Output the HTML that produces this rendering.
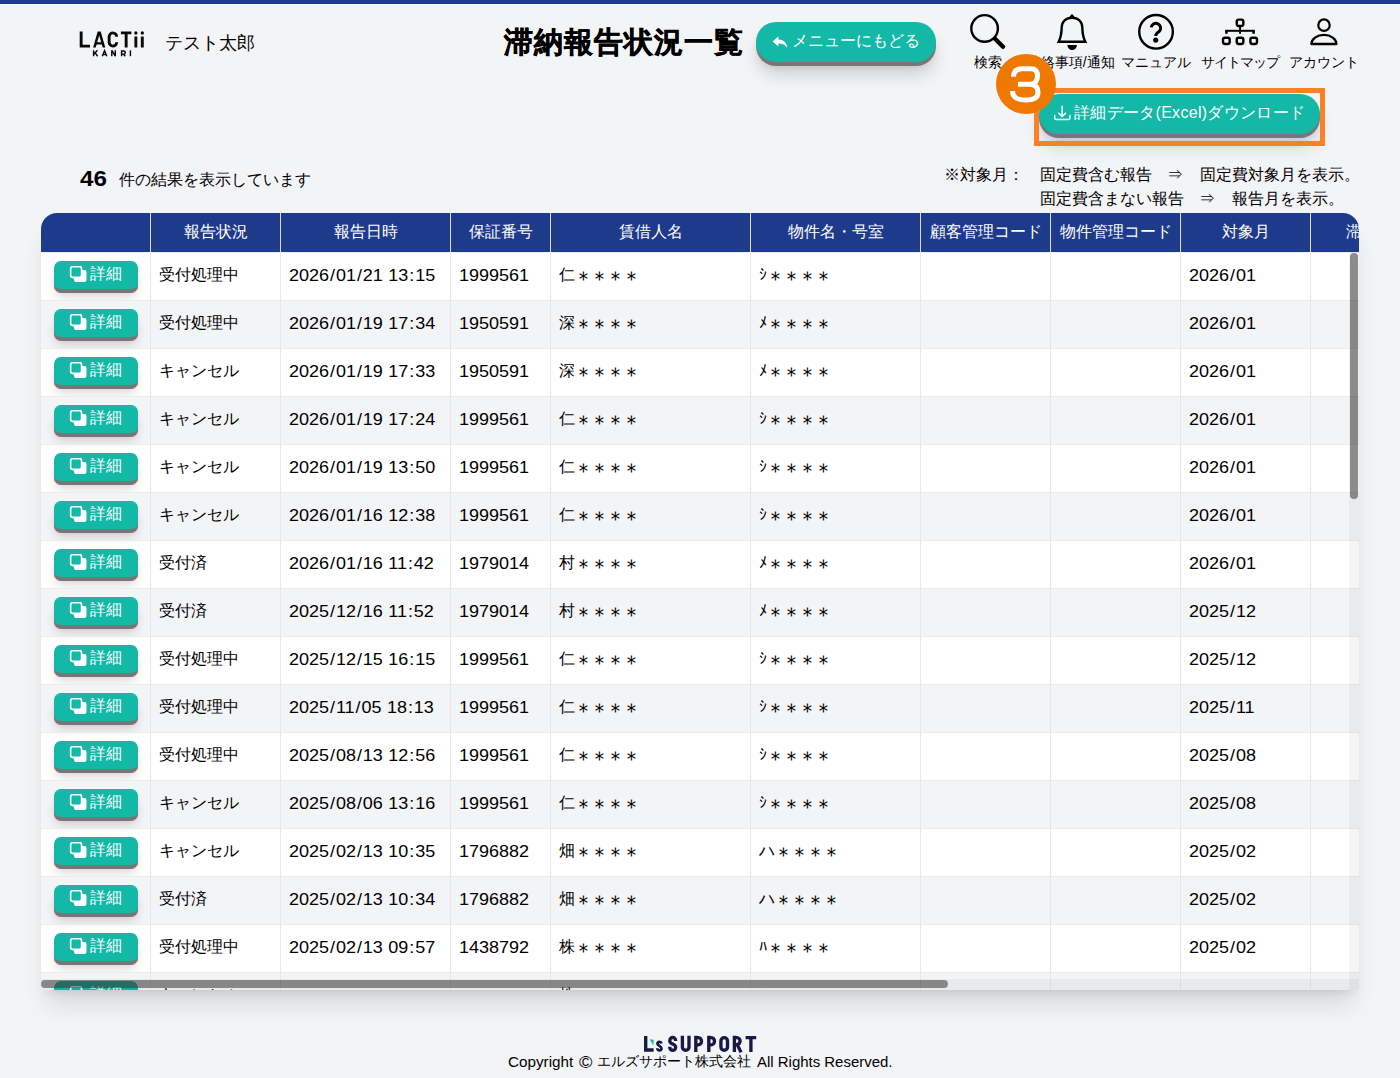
<!DOCTYPE html>
<html lang="ja">
<head>
<meta charset="utf-8">
<title>滞納報告状況一覧</title>
<style>
*{box-sizing:border-box;margin:0;padding:0}
html,body{width:1400px;height:1078px;overflow:hidden}
body{position:relative;background:#f3f4f6;color:#000;font-family:"Liberation Sans",sans-serif;font-size:16px;line-height:1}
.abs{position:absolute;white-space:nowrap}
.topbar{position:absolute;left:0;top:0;width:1400px;height:4px;background:#1e3a8a}
.user{left:165px;top:33px;font-size:18px;line-height:20px}
.title{left:504.3px;top:25px;font-size:29px;line-height:34px;font-weight:bold;letter-spacing:.95px;-webkit-text-stroke:.45px #000}
.pill{position:absolute;background:#14b8a6;color:#fff;border-radius:22px;box-shadow:0 4px 0 #777,0 14px 18px -2px rgba(0,0,0,.16),0 6px 8px -2px rgba(0,0,0,.10);white-space:nowrap}
.menu{left:756px;top:22px;width:180px;height:40px}
.menu svg{position:absolute;left:16px;top:14px}
.menu span{position:absolute;left:35.6px;top:9px;font-size:16px;line-height:20px}
.nav{position:absolute;top:0;text-align:center;white-space:nowrap}
.nav svg{position:absolute;left:0;top:0;overflow:visible}
.lbl{position:absolute;top:54.4px;font-size:14px;line-height:16px;white-space:nowrap;transform:translateX(-50%)}
.circ{position:absolute;left:996px;top:54px;width:60px;height:60px;border-radius:50%;background:#ee7800}
.hl{position:absolute;left:1034px;top:88px;width:291px;height:58px;border:5px solid #ff7f27}
.dl{left:1039px;top:94px;width:281px;height:40px;border-radius:20px}
.dl svg{position:absolute;left:14px;top:10px}
.dl span{position:absolute;left:35px;top:9px;font-size:16px;line-height:20px;letter-spacing:.3px}
.cnt{left:80.4px;top:166.6px;font-size:21.4px;line-height:24px;font-weight:bold}
.cnt2{left:119.3px;top:171px;font-size:16px;line-height:18px}
.note{font-size:16px;line-height:18px}
.v{display:inline-block;transform-origin:0 50%;white-space:nowrap}
td .v{font-size:17px;transform:scaleX(1.058);word-spacing:.4px}
.v i{font-style:normal;padding:0 .9px}
.wrap{position:absolute;left:41px;top:213px;width:1318px;height:776.6px;overflow:hidden;background:#fff;border-radius:16px 16px 0 0}
.shadow{position:absolute;left:41px;top:213px;width:1318px;height:776.6px;border-radius:16px 16px 2px 2px;box-shadow:0 20px 25px -5px rgba(0,0,0,.11),0 8px 10px -6px rgba(0,0,0,.10)}
table{border-collapse:separate;border-spacing:0;table-layout:fixed;width:1450px}
th{height:39px;padding-bottom:1.6px;background:#1e3a8a;color:#fff;font-weight:normal;font-size:16px;border-left:1px solid #d9dde6;text-align:center;vertical-align:middle;white-space:nowrap;overflow:hidden}
th:first-child{border-left:0}
td{height:48px;border-left:1px solid #e5e7eb;border-top:1px solid #ebebec;vertical-align:middle;white-space:nowrap;padding-left:8px;font-size:16px;overflow:hidden}
td:first-child{border-left:0}
tbody tr:nth-child(even) td{background:#f3f4f6}
td.c0{padding-left:13px;overflow:visible;position:relative}
.dbtn{position:absolute;left:13px;top:8px;display:block;width:84px;height:28px;border-radius:7px;background:#14b8a6;color:#fff;box-shadow:0 4px 0 #777,0 10px 12px -2px rgba(0,0,0,.14),0 4px 6px -2px rgba(0,0,0,.10)}
.dbtn .ic{position:absolute;left:15px;top:5px}
.dbtn .dt{position:absolute;left:36px;top:4px;font-size:16px;line-height:18px}
.j{display:inline-block;position:relative;top:-2px}
td .v{position:relative;top:-1px}
tbody tr:last-child .v{top:1px}
.as{display:inline-block;font-size:21px;line-height:16px;letter-spacing:-5px;margin-left:-2.5px;vertical-align:top;position:relative;top:4.4px}
.vtr{position:absolute;left:1349px;top:252px;width:10px;height:737.6px;background:rgba(0,0,0,.04)}
.htr{position:absolute;left:41px;top:979.4px;width:1318px;height:10.2px;background:rgba(0,0,0,.04)}
.vsb{position:absolute;left:1350px;top:253px;width:8px;height:246px;border-radius:4px;background:rgba(51,51,51,.54)}
.hsb{position:absolute;left:41px;top:980px;width:907px;height:7.8px;border-radius:4px;background:rgba(51,51,51,.54)}
.copy{top:1054px;left:508px;font-size:14px;line-height:16px}
</style>
</head>
<body>
<div class="topbar"></div>

<!-- LACTii KANRI logo -->
<svg class="abs" style="left:74px;top:26px" width="80" height="36" viewBox="74 26 80 36">
 <g fill="none" stroke="#0a0a0a" stroke-width="2.9" stroke-linecap="butt" stroke-linejoin="miter">
  <path d="M81.15 31.4V46.15H90"/>
  <path d="M116.7 36.7A3.78 4 0 0 0 109.15 36.6V42.4A3.78 4 0 0 0 116.7 42.3"/>
  <path d="M120.9 32.85H131.4M126.15 32.85V47.6"/>
  <path d="M135.85 36.6V47.6M142.3 36.6V47.6"/>
 </g>
 <circle cx="135.85" cy="33" r="1.65" fill="#0a0a0a"/><circle cx="142.3" cy="33" r="1.65" fill="#0a0a0a"/>
 <path d="M93.1 47.6L97.7 31.4H100.7L105.3 47.6H102.67L101.82 44.6H96.58L95.73 47.6ZM97.24 42.3H101.16L99.2 35.4Z" fill="#0a0a0a" fill-rule="evenodd"/>
 <g fill="none" stroke="#0a0a0a" stroke-width="1.45" stroke-linecap="butt" stroke-linejoin="miter">
  <path d="M93.6 50.3V56.2M97.4 50.3L93.9 54.2M95.2 52.9L97.6 56.2"/>
  <path d="M102.3 56.2L104.55 50.6L106.8 56.2M103.2 54.5H105.9"/>
  <path d="M111.8 56.2V50.3L115.3 56.2V50.3" stroke-linejoin="bevel"/>
  <path d="M121.6 56.2V51H123.7A1.55 1.55 0 0 1 123.7 54.1H121.6M123.5 54.1L125.2 56.2"/>
  <path d="M130.4 50.3V56.2"/>
 </g>
</svg>

<div class="abs user">テスト太郎</div>
<div class="abs title">滞納報告状況一覧</div>

<div class="pill menu">
 <svg width="16" height="13" viewBox="0 0 16 13"><path d="M6.4 0.6L0.6 5.6L6.4 10.6V7.6C10.4 7.5 13 8.6 15.2 12C14.8 7 12 3.9 6.4 3.6Z" fill="#fff"/></svg>
 <span>メニューにもどる</span>
</div>

<!-- nav icons -->
<svg class="abs" style="left:960px;top:8px;overflow:visible" width="410" height="50" viewBox="960 8 410 50">
 <g fill="none" stroke="#000" stroke-width="2.4" stroke-linecap="round" stroke-linejoin="round">
  <!-- search -->
  <circle cx="984.6" cy="28.45" r="13.3"/>
  <path d="M995 38.8L1003 46.8" stroke-width="4.4"/>
  <!-- bell -->
  <path d="M1058.7 41.8C1060.6 38 1061.6 33 1061.7 27.5C1061.7 21.5 1066 17.7 1072 17.7C1078 17.7 1082.3 21.5 1082.3 27.5C1082.4 33 1083.4 38 1085.3 41.8Z" stroke-linejoin="miter" stroke-miterlimit="6"/>
  <path d="M1069.2 17.3L1071.1 14.7Q1072 13.6 1072.9 14.7L1074.8 17.3Z" fill="#000" stroke="none"/>
  <path d="M1067.4 44.9H1076.9A4.75 5.2 0 0 1 1067.4 44.9Z" fill="#000" stroke="none"/>
  <!-- help -->
  <circle cx="1156.05" cy="31.8" r="16.8"/>
  <path d="M1151.2 27.4A4.75 4.75 0 1 1 1159.4 31.3C1157.2 32.9 1155.7 33.7 1155.7 36" stroke-width="2.95" stroke-linecap="butt"/>
  <circle cx="1155.7" cy="40.1" r="2.6" fill="#000" stroke="none"/>
  <!-- sitemap -->
  <rect x="1236.75" y="19.65" width="6.6" height="6.3" rx="1.9"/>
  <rect x="1223" y="37.7" width="6.7" height="6.3" rx="1.9"/>
  <rect x="1236.75" y="37.7" width="6.6" height="6.3" rx="1.9"/>
  <rect x="1250.4" y="37.7" width="6.6" height="6.3" rx="1.9"/>
  <path d="M1225.1 30.8H1254.9" stroke-width="2" stroke-linecap="butt"/>
  <path d="M1240.05 27V33.8" stroke-width="1.9" stroke-linecap="butt"/>
  <path d="M1226.4 30.8V33.8M1253.6 30.8V33.8" stroke-width="2.6" stroke-linecap="butt"/>
  <!-- account -->
  <circle cx="1324" cy="25.15" r="5.7" stroke-width="2.25"/>
  <path d="M1311.4 44A12.5 9.1 0 0 1 1336.4 44Z" stroke-width="2.3"/>
 </g>
</svg>
<div class="lbl" style="left:988.3px">検索</div>
<div class="lbl" style="left:1070.8px">連絡事項/通知</div>
<div class="lbl" style="left:1156px">マニュアル</div>
<div class="lbl" style="left:1240.3px;letter-spacing:-.9px">サイトマップ</div>
<div class="lbl" style="left:1324px">アカウント</div>

<!-- highlighted download button -->
<div class="pill dl">
 <svg style="left:11px;top:6px" width="24" height="24" viewBox="1050 100 24 24" fill="none" stroke="#fff" stroke-width="1.5" stroke-linecap="round" stroke-linejoin="round"><path d="M1062.2 106.2V116.2M1058.8 113.2L1062.2 116.5L1065.6 113.2M1054.7 115.6V118.1A1.3 1.3 0 0 0 1056 119.4H1068.6A1.3 1.3 0 0 0 1069.9 118.1V115.6"/></svg>
 <span>詳細データ(Excel)ダウンロード</span>
</div>
<div class="hl"></div>
<div class="circ"></div>
<svg class="abs" style="left:996px;top:54px" width="60" height="60" viewBox="996 54 60 60"><path d="M1013.5 76.8C1013.5 70.7 1017.1 68.75 1022.7 68.75H1030.5C1036 68.75 1037.5 72 1037.5 75.7C1037.5 80.6 1035 84.2 1029.9 84.2H1018M1029.9 84.2C1036.4 84.5 1038 88.5 1038 92.4C1038 98 1033 99.9 1026 99.9C1017.6 99.9 1012.6 98 1012.5 91" fill="none" stroke="#fff" stroke-width="5" stroke-linejoin="round"/></svg>

<div class="abs cnt"><span class="v" style="transform:scaleX(1.13)">46</span></div>
<div class="abs cnt2">件の結果を表示しています</div>

<div class="abs note" style="left:944px;top:166px">※対象月：</div>
<div class="abs note" style="left:1040px;top:166px">固定費含む報告</div>
<div class="abs note" style="left:1167px;top:166px">⇒</div>
<div class="abs note" style="left:1200px;top:166px">固定費対象月を表示。</div>
<div class="abs note" style="left:1040px;top:190px">固定費含まない報告</div>
<div class="abs note" style="left:1199px;top:190px">⇒</div>
<div class="abs note" style="left:1232px;top:190px">報告月を表示。</div>

<div class="shadow"></div>
<div class="wrap">
<table>
<colgroup><col style="width:109px"><col style="width:130px"><col style="width:170px"><col style="width:100px"><col style="width:200px"><col style="width:170px"><col style="width:130px"><col style="width:130px"><col style="width:130px"><col style="width:181px"></colgroup>
<thead><tr><th></th><th>報告状況</th><th>報告日時</th><th>保証番号</th><th>賃借人名</th><th>物件名・号室</th><th>顧客管理コード</th><th>物件管理コード</th><th>対象月</th><th style="text-align:left;padding-left:35px">滞納</th></tr></thead>
<tbody>
<tr><td class="c0"><span class="dbtn"><svg class="ic" viewBox="0 0 18 16" width="18" height="16"><rect x="4.9" y="4" width="12.6" height="11.9" rx="2.2" fill="#fff"/><rect x="1.65" y="0.65" width="10.9" height="10.7" rx="2" fill="#14b8a6" stroke="#fff" stroke-width="1.7"/></svg><span class="dt">詳細</span></span></td><td class="c1"><span class="j">受付処理中</span></td><td class="c2"><span class="v vd">2026<i>/</i>01<i>/</i>21 13<i>:</i>15</span></td><td class="c3"><span class="v vn">1999561</span></td><td class="c4"><span class="j">仁<span class="as">＊＊＊＊</span></span></td><td class="c5"><span class="j">ｼ<span class="as">＊＊＊＊</span></span></td><td class="c6"></td><td class="c7"></td><td class="c8"><span class="v vm">2026<i>/</i>01</span></td><td class="c9"></td></tr>
<tr><td class="c0"><span class="dbtn"><svg class="ic" viewBox="0 0 18 16" width="18" height="16"><rect x="4.9" y="4" width="12.6" height="11.9" rx="2.2" fill="#fff"/><rect x="1.65" y="0.65" width="10.9" height="10.7" rx="2" fill="#14b8a6" stroke="#fff" stroke-width="1.7"/></svg><span class="dt">詳細</span></span></td><td class="c1"><span class="j">受付処理中</span></td><td class="c2"><span class="v vd">2026<i>/</i>01<i>/</i>19 17<i>:</i>34</span></td><td class="c3"><span class="v vn">1950591</span></td><td class="c4"><span class="j">深<span class="as">＊＊＊＊</span></span></td><td class="c5"><span class="j">ﾒ<span class="as">＊＊＊＊</span></span></td><td class="c6"></td><td class="c7"></td><td class="c8"><span class="v vm">2026<i>/</i>01</span></td><td class="c9"></td></tr>
<tr><td class="c0"><span class="dbtn"><svg class="ic" viewBox="0 0 18 16" width="18" height="16"><rect x="4.9" y="4" width="12.6" height="11.9" rx="2.2" fill="#fff"/><rect x="1.65" y="0.65" width="10.9" height="10.7" rx="2" fill="#14b8a6" stroke="#fff" stroke-width="1.7"/></svg><span class="dt">詳細</span></span></td><td class="c1"><span class="j">キャンセル</span></td><td class="c2"><span class="v vd">2026<i>/</i>01<i>/</i>19 17<i>:</i>33</span></td><td class="c3"><span class="v vn">1950591</span></td><td class="c4"><span class="j">深<span class="as">＊＊＊＊</span></span></td><td class="c5"><span class="j">ﾒ<span class="as">＊＊＊＊</span></span></td><td class="c6"></td><td class="c7"></td><td class="c8"><span class="v vm">2026<i>/</i>01</span></td><td class="c9"></td></tr>
<tr><td class="c0"><span class="dbtn"><svg class="ic" viewBox="0 0 18 16" width="18" height="16"><rect x="4.9" y="4" width="12.6" height="11.9" rx="2.2" fill="#fff"/><rect x="1.65" y="0.65" width="10.9" height="10.7" rx="2" fill="#14b8a6" stroke="#fff" stroke-width="1.7"/></svg><span class="dt">詳細</span></span></td><td class="c1"><span class="j">キャンセル</span></td><td class="c2"><span class="v vd">2026<i>/</i>01<i>/</i>19 17<i>:</i>24</span></td><td class="c3"><span class="v vn">1999561</span></td><td class="c4"><span class="j">仁<span class="as">＊＊＊＊</span></span></td><td class="c5"><span class="j">ｼ<span class="as">＊＊＊＊</span></span></td><td class="c6"></td><td class="c7"></td><td class="c8"><span class="v vm">2026<i>/</i>01</span></td><td class="c9"></td></tr>
<tr><td class="c0"><span class="dbtn"><svg class="ic" viewBox="0 0 18 16" width="18" height="16"><rect x="4.9" y="4" width="12.6" height="11.9" rx="2.2" fill="#fff"/><rect x="1.65" y="0.65" width="10.9" height="10.7" rx="2" fill="#14b8a6" stroke="#fff" stroke-width="1.7"/></svg><span class="dt">詳細</span></span></td><td class="c1"><span class="j">キャンセル</span></td><td class="c2"><span class="v vd">2026<i>/</i>01<i>/</i>19 13<i>:</i>50</span></td><td class="c3"><span class="v vn">1999561</span></td><td class="c4"><span class="j">仁<span class="as">＊＊＊＊</span></span></td><td class="c5"><span class="j">ｼ<span class="as">＊＊＊＊</span></span></td><td class="c6"></td><td class="c7"></td><td class="c8"><span class="v vm">2026<i>/</i>01</span></td><td class="c9"></td></tr>
<tr><td class="c0"><span class="dbtn"><svg class="ic" viewBox="0 0 18 16" width="18" height="16"><rect x="4.9" y="4" width="12.6" height="11.9" rx="2.2" fill="#fff"/><rect x="1.65" y="0.65" width="10.9" height="10.7" rx="2" fill="#14b8a6" stroke="#fff" stroke-width="1.7"/></svg><span class="dt">詳細</span></span></td><td class="c1"><span class="j">キャンセル</span></td><td class="c2"><span class="v vd">2026<i>/</i>01<i>/</i>16 12<i>:</i>38</span></td><td class="c3"><span class="v vn">1999561</span></td><td class="c4"><span class="j">仁<span class="as">＊＊＊＊</span></span></td><td class="c5"><span class="j">ｼ<span class="as">＊＊＊＊</span></span></td><td class="c6"></td><td class="c7"></td><td class="c8"><span class="v vm">2026<i>/</i>01</span></td><td class="c9"></td></tr>
<tr><td class="c0"><span class="dbtn"><svg class="ic" viewBox="0 0 18 16" width="18" height="16"><rect x="4.9" y="4" width="12.6" height="11.9" rx="2.2" fill="#fff"/><rect x="1.65" y="0.65" width="10.9" height="10.7" rx="2" fill="#14b8a6" stroke="#fff" stroke-width="1.7"/></svg><span class="dt">詳細</span></span></td><td class="c1"><span class="j">受付済</span></td><td class="c2"><span class="v vd">2026<i>/</i>01<i>/</i>16 11<i>:</i>42</span></td><td class="c3"><span class="v vn">1979014</span></td><td class="c4"><span class="j">村<span class="as">＊＊＊＊</span></span></td><td class="c5"><span class="j">ﾒ<span class="as">＊＊＊＊</span></span></td><td class="c6"></td><td class="c7"></td><td class="c8"><span class="v vm">2026<i>/</i>01</span></td><td class="c9"></td></tr>
<tr><td class="c0"><span class="dbtn"><svg class="ic" viewBox="0 0 18 16" width="18" height="16"><rect x="4.9" y="4" width="12.6" height="11.9" rx="2.2" fill="#fff"/><rect x="1.65" y="0.65" width="10.9" height="10.7" rx="2" fill="#14b8a6" stroke="#fff" stroke-width="1.7"/></svg><span class="dt">詳細</span></span></td><td class="c1"><span class="j">受付済</span></td><td class="c2"><span class="v vd">2025<i>/</i>12<i>/</i>16 11<i>:</i>52</span></td><td class="c3"><span class="v vn">1979014</span></td><td class="c4"><span class="j">村<span class="as">＊＊＊＊</span></span></td><td class="c5"><span class="j">ﾒ<span class="as">＊＊＊＊</span></span></td><td class="c6"></td><td class="c7"></td><td class="c8"><span class="v vm">2025<i>/</i>12</span></td><td class="c9"></td></tr>
<tr><td class="c0"><span class="dbtn"><svg class="ic" viewBox="0 0 18 16" width="18" height="16"><rect x="4.9" y="4" width="12.6" height="11.9" rx="2.2" fill="#fff"/><rect x="1.65" y="0.65" width="10.9" height="10.7" rx="2" fill="#14b8a6" stroke="#fff" stroke-width="1.7"/></svg><span class="dt">詳細</span></span></td><td class="c1"><span class="j">受付処理中</span></td><td class="c2"><span class="v vd">2025<i>/</i>12<i>/</i>15 16<i>:</i>15</span></td><td class="c3"><span class="v vn">1999561</span></td><td class="c4"><span class="j">仁<span class="as">＊＊＊＊</span></span></td><td class="c5"><span class="j">ｼ<span class="as">＊＊＊＊</span></span></td><td class="c6"></td><td class="c7"></td><td class="c8"><span class="v vm">2025<i>/</i>12</span></td><td class="c9"></td></tr>
<tr><td class="c0"><span class="dbtn"><svg class="ic" viewBox="0 0 18 16" width="18" height="16"><rect x="4.9" y="4" width="12.6" height="11.9" rx="2.2" fill="#fff"/><rect x="1.65" y="0.65" width="10.9" height="10.7" rx="2" fill="#14b8a6" stroke="#fff" stroke-width="1.7"/></svg><span class="dt">詳細</span></span></td><td class="c1"><span class="j">受付処理中</span></td><td class="c2"><span class="v vd">2025<i>/</i>11<i>/</i>05 18<i>:</i>13</span></td><td class="c3"><span class="v vn">1999561</span></td><td class="c4"><span class="j">仁<span class="as">＊＊＊＊</span></span></td><td class="c5"><span class="j">ｼ<span class="as">＊＊＊＊</span></span></td><td class="c6"></td><td class="c7"></td><td class="c8"><span class="v vm">2025<i>/</i>11</span></td><td class="c9"></td></tr>
<tr><td class="c0"><span class="dbtn"><svg class="ic" viewBox="0 0 18 16" width="18" height="16"><rect x="4.9" y="4" width="12.6" height="11.9" rx="2.2" fill="#fff"/><rect x="1.65" y="0.65" width="10.9" height="10.7" rx="2" fill="#14b8a6" stroke="#fff" stroke-width="1.7"/></svg><span class="dt">詳細</span></span></td><td class="c1"><span class="j">受付処理中</span></td><td class="c2"><span class="v vd">2025<i>/</i>08<i>/</i>13 12<i>:</i>56</span></td><td class="c3"><span class="v vn">1999561</span></td><td class="c4"><span class="j">仁<span class="as">＊＊＊＊</span></span></td><td class="c5"><span class="j">ｼ<span class="as">＊＊＊＊</span></span></td><td class="c6"></td><td class="c7"></td><td class="c8"><span class="v vm">2025<i>/</i>08</span></td><td class="c9"></td></tr>
<tr><td class="c0"><span class="dbtn"><svg class="ic" viewBox="0 0 18 16" width="18" height="16"><rect x="4.9" y="4" width="12.6" height="11.9" rx="2.2" fill="#fff"/><rect x="1.65" y="0.65" width="10.9" height="10.7" rx="2" fill="#14b8a6" stroke="#fff" stroke-width="1.7"/></svg><span class="dt">詳細</span></span></td><td class="c1"><span class="j">キャンセル</span></td><td class="c2"><span class="v vd">2025<i>/</i>08<i>/</i>06 13<i>:</i>16</span></td><td class="c3"><span class="v vn">1999561</span></td><td class="c4"><span class="j">仁<span class="as">＊＊＊＊</span></span></td><td class="c5"><span class="j">ｼ<span class="as">＊＊＊＊</span></span></td><td class="c6"></td><td class="c7"></td><td class="c8"><span class="v vm">2025<i>/</i>08</span></td><td class="c9"></td></tr>
<tr><td class="c0"><span class="dbtn"><svg class="ic" viewBox="0 0 18 16" width="18" height="16"><rect x="4.9" y="4" width="12.6" height="11.9" rx="2.2" fill="#fff"/><rect x="1.65" y="0.65" width="10.9" height="10.7" rx="2" fill="#14b8a6" stroke="#fff" stroke-width="1.7"/></svg><span class="dt">詳細</span></span></td><td class="c1"><span class="j">キャンセル</span></td><td class="c2"><span class="v vd">2025<i>/</i>02<i>/</i>13 10<i>:</i>35</span></td><td class="c3"><span class="v vn">1796882</span></td><td class="c4"><span class="j">畑<span class="as">＊＊＊＊</span></span></td><td class="c5"><span class="j">ハ<span class="as">＊＊＊＊</span></span></td><td class="c6"></td><td class="c7"></td><td class="c8"><span class="v vm">2025<i>/</i>02</span></td><td class="c9"></td></tr>
<tr><td class="c0"><span class="dbtn"><svg class="ic" viewBox="0 0 18 16" width="18" height="16"><rect x="4.9" y="4" width="12.6" height="11.9" rx="2.2" fill="#fff"/><rect x="1.65" y="0.65" width="10.9" height="10.7" rx="2" fill="#14b8a6" stroke="#fff" stroke-width="1.7"/></svg><span class="dt">詳細</span></span></td><td class="c1"><span class="j">受付済</span></td><td class="c2"><span class="v vd">2025<i>/</i>02<i>/</i>13 10<i>:</i>34</span></td><td class="c3"><span class="v vn">1796882</span></td><td class="c4"><span class="j">畑<span class="as">＊＊＊＊</span></span></td><td class="c5"><span class="j">ハ<span class="as">＊＊＊＊</span></span></td><td class="c6"></td><td class="c7"></td><td class="c8"><span class="v vm">2025<i>/</i>02</span></td><td class="c9"></td></tr>
<tr><td class="c0"><span class="dbtn"><svg class="ic" viewBox="0 0 18 16" width="18" height="16"><rect x="4.9" y="4" width="12.6" height="11.9" rx="2.2" fill="#fff"/><rect x="1.65" y="0.65" width="10.9" height="10.7" rx="2" fill="#14b8a6" stroke="#fff" stroke-width="1.7"/></svg><span class="dt">詳細</span></span></td><td class="c1"><span class="j">受付処理中</span></td><td class="c2"><span class="v vd">2025<i>/</i>02<i>/</i>13 09<i>:</i>57</span></td><td class="c3"><span class="v vn">1438792</span></td><td class="c4"><span class="j">株<span class="as">＊＊＊＊</span></span></td><td class="c5"><span class="j">ﾊ<span class="as">＊＊＊＊</span></span></td><td class="c6"></td><td class="c7"></td><td class="c8"><span class="v vm">2025<i>/</i>02</span></td><td class="c9"></td></tr>
<tr><td class="c0"><span class="dbtn"><svg class="ic" viewBox="0 0 18 16" width="18" height="16"><rect x="4.9" y="4" width="12.6" height="11.9" rx="2.2" fill="#fff"/><rect x="1.65" y="0.65" width="10.9" height="10.7" rx="2" fill="#14b8a6" stroke="#fff" stroke-width="1.7"/></svg><span class="dt">詳細</span></span></td><td class="c1"><span class="j">キャンセル</span></td><td class="c2"><span class="v vd">2025<i>/</i>02<i>/</i>13 09<i>:</i>56</span></td><td class="c3"><span class="v vn">1438792</span></td><td class="c4"><span class="j">株<span class="as">＊＊＊＊</span></span></td><td class="c5"><span class="j">ﾊ<span class="as">＊＊＊＊</span></span></td><td class="c6"></td><td class="c7"></td><td class="c8"><span class="v vm">2025<i>/</i>02</span></td><td class="c9"></td></tr>
</tbody>
</table>
</div>
<div class="vtr"></div><div class="htr"></div>
<div class="vsb"></div>
<div class="hsb"></div>

<!-- footer -->
<svg class="abs" style="left:640px;top:1032px" width="120" height="24" viewBox="640 1032 120 24">
 <g fill="none" stroke="#161a47" stroke-width="3.35" stroke-linecap="butt" stroke-linejoin="miter">
  <path d="M645.7 1036V1050H653.6"/>
  <path d="M661.5 1043.6A2.1 2 0 0 0 657.4 1043.4C657.4 1046 661.5 1045.7 661.5 1048.5A2.1 2 0 0 1 657.3 1048.3" stroke-width="2.7"/>
  <path d="M675.6 1040.9V1040.4A2.9 2.9 0 0 0 669.8 1040.4V1040.9C669.8 1044.5 675.6 1043.5 675.6 1047V1047.4A2.9 2.9 0 0 1 669.8 1047.4V1046.8"/>
  <path d="M682.4 1035.8V1046.9A3.3 3.3 0 0 0 689 1046.9V1035.8"/>
  <path d="M695.8 1035.8V1052M695.8 1037.6H698.3A3.2 3.6 0 0 1 698.3 1044.8H695.8"/>
  <path d="M708.8 1035.8V1052M708.8 1037.6H711.3A3.2 3.6 0 0 1 711.3 1044.8H708.8"/>
  <path d="M720.9 1040.9A3.3 3.3 0 0 1 727.5 1040.9V1046.9A3.3 3.3 0 0 1 720.9 1046.9Z"/>
  <path d="M734.4 1035.8V1052M734.4 1037.6H736.9A3.2 3.5 0 0 1 736.9 1044.6H734.4M737.2 1044.4L741 1052.4" stroke-linejoin="bevel"/>
  <path d="M745.6 1037.6H756.2M750.9 1037.6V1052"/>
 </g>
 <path d="M649.6 1039.2L653.7 1039.7L653.3 1045.4Z" fill="#1fb5a3"/>
</svg>
<div class="abs copy"><span class="v" style="transform:scaleX(1.088)">Copyright</span></div>
<div class="abs copy" style="left:579.2px;top:1053px;font-size:16.3px;line-height:18px"><span class="v" style="transform:scaleX(1.12)">©</span></div>
<div class="abs copy" style="left:597.4px;top:1053.3px">エルズサポート株式会社</div>
<div class="abs copy" style="left:757px"><span class="v" style="transform:scaleX(1.068)">All Rights Reserved.</span></div>
</body>
</html>
